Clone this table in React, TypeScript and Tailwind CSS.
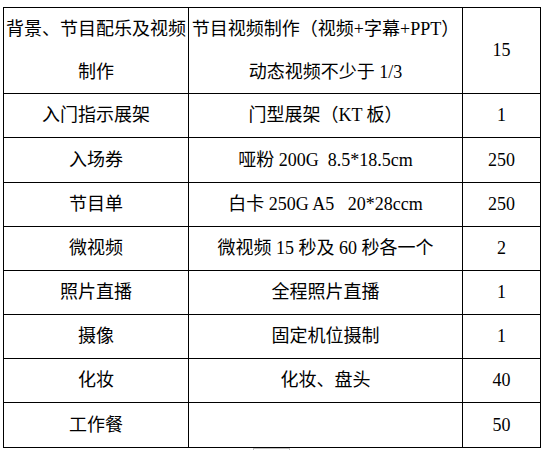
const font =
  "font-['Liberation_Serif','Noto_Sans_CJK_SC',serif] text-[18px] text-black";

type Row = { item: string[]; spec: string[]; qty: string; h: string };

const rows: Row[] = [
  {
    item: ["背景、节目配乐及视频", "制作"],
    spec: ["节目视频制作（视频+字幕+PPT）", "动态视频不少于 1/3"],
    qty: "15",
    h: "h-[86px]",
  },
  { item: ["入门指示展架"], spec: ["门型展架（KT 板）"], qty: "1", h: "h-[44px]" },
  { item: ["入场券"], spec: ["哑粉 200G  8.5*18.5cm"], qty: "250", h: "h-[45px]" },
  { item: ["节目单"], spec: ["白卡 250G A5   20*28ccm"], qty: "250", h: "h-[44px]" },
  { item: ["微视频"], spec: ["微视频 15 秒及 60 秒各一个"], qty: "2", h: "h-[44px]" },
  { item: ["照片直播"], spec: ["全程照片直播"], qty: "1", h: "h-[44px]" },
  { item: ["摄像"], spec: ["固定机位摄制"], qty: "1", h: "h-[44px]" },
  { item: ["化妆"], spec: ["化妆、盘头"], qty: "40", h: "h-[44px]" },
  { item: ["工作餐"], spec: [], qty: "50", h: "h-[45px]" },
];

function Cell({ lines, className }: { lines: string[]; className?: string }) {
  return (
    <div
      className={`flex flex-col items-center justify-center border-r border-b border-black leading-[43px] whitespace-pre ${className ?? ""}`}
    >
      {lines.map((l, i) => (
        <span key={i}>{l}</span>
      ))}
    </div>
  );
}

export default function App() {
  return (
    <div className={`h-[450px] w-[545px] overflow-hidden bg-white pl-[3px] pt-[7px] ${font}`}>
      <div className="grid w-[538px] grid-cols-[185px_274px_78px] border-l border-t border-black">
        {rows.map((r, i) => (
          <div key={i} className="contents">
            <Cell lines={r.item} className={r.h} />
            <Cell lines={r.spec} className={r.h} />
            <Cell lines={[r.qty]} className={r.h} />
          </div>
        ))}
      </div>
      {/* paragraph mark under the table */}
      <div className="ml-[250px] h-[3px] w-[37px] border-x border-t border-[#c0c0c0]" />
    </div>
  );
}
